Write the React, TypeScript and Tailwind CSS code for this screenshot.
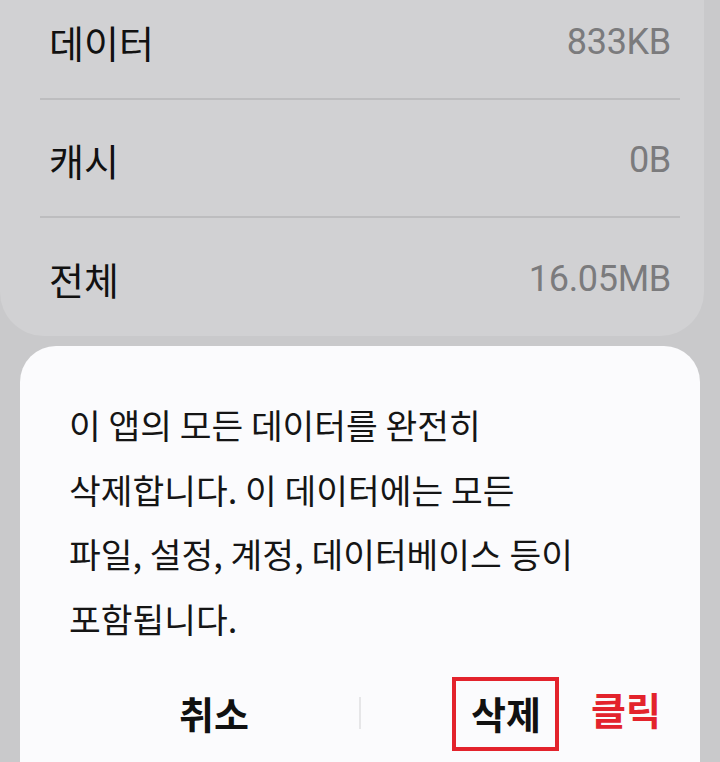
const rows = [
  { label: "데이터", value: "833KB" },
  { label: "캐시", value: "0B" },
  { label: "전체", value: "16.05MB" },
];

const korean = "font-['Noto_Sans_CJK_KR','Noto_Sans',sans-serif]";

const App = () => {
  return (
    <div className="h-[762px] w-[720px] overflow-hidden bg-[#c9c9cb]">
      <div className="mr-[16px] mt-[-18px] rounded-b-[44px] bg-[#d1d1d3] pl-[40px] pr-[24px]">
        {rows.map((row, i) => (
          <div
            key={row.label}
            className={`flex h-[118px] items-center justify-between px-[9px] pt-[4px] ${
              i < rows.length - 1 ? "border-b-2 border-[#bdbdbf]" : ""
            }`}
          >
            <span className={`${korean} text-[38px] leading-none text-[#111]`}>{row.label}</span>
            <span className="font-['Roboto',sans-serif] text-[36px] leading-none tracking-[-0.3px] text-[#7b7b7d]">
              {row.value}
            </span>
          </div>
        ))}
      </div>

      <div className="mx-[20px] mt-[10px] rounded-t-[36px] bg-[#fbfbfd] px-[49px] pb-[40px] pt-[46px]">
        <p className={`${korean} text-[34.5px] leading-[64.5px] text-[#151515]`}>
          이 앱의 모든 데이터를 완전히
          <br />
          삭제합니다. 이 데이터에는 모든
          <br />
          파일, 설정, 계정, 데이터베이스 등이
          <br />
          포함됩니다.
        </p>

        <div className="mt-[33px] flex h-[60px] items-center">
          <div className="flex flex-1 justify-center">
            <span className={`${korean} text-[38px] font-bold leading-none text-[#111]`}>취소</span>
          </div>
          <div className="h-[32px] w-[2px] bg-[#e6e6e8]" />
          <div className="relative flex flex-1 justify-center">
            <span className={`${korean} relative text-[38px] font-bold leading-none text-[#111]`}>
              삭제
              <span className="absolute left-[-19px] right-[-18px] top-[-17px] bottom-[-19px] border-4 border-[#e3232c]" />
            </span>
            <span
              className={`${korean} absolute left-[230px] top-[-4px] whitespace-nowrap text-[38px] font-bold leading-none text-[#e3232c]`}
            >
              클릭
            </span>
          </div>
        </div>
      </div>
    </div>
  );
};

export default App;
